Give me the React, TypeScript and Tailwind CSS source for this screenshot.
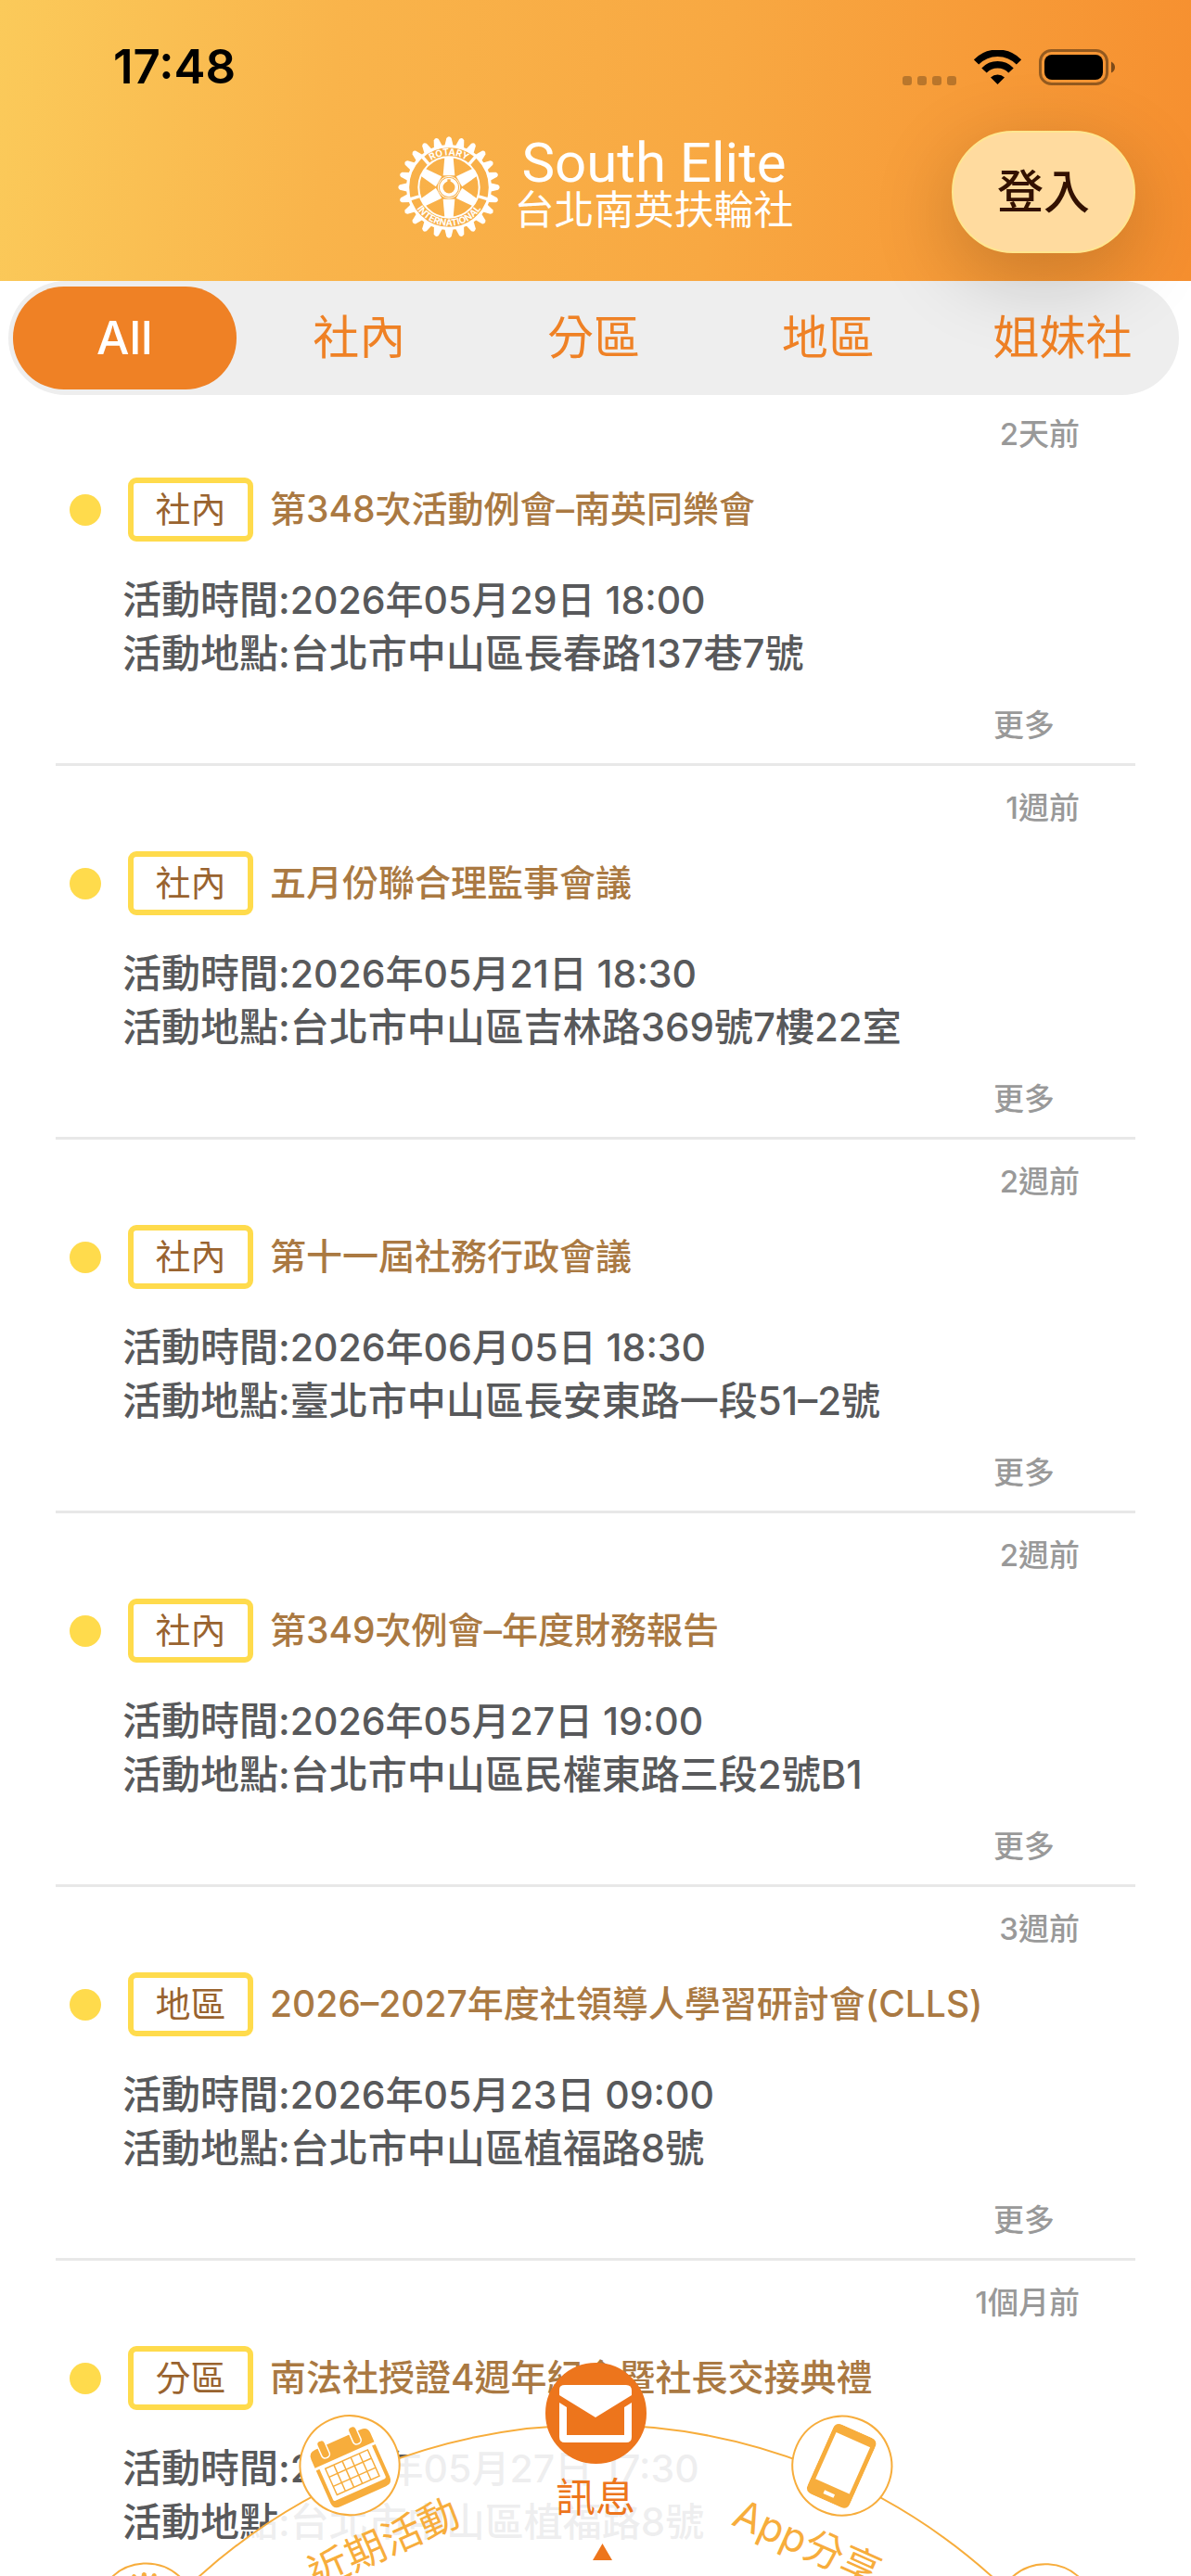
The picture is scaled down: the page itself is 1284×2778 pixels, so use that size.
import type { ReactNode } from "react";

type Activity = { tag: string; title: string; age: string; time: string; place: string };

const tabs = ["All", "社內", "分區", "地區", "姐妹社"];

const activities: Activity[] = [
  { tag: "社內", title: "第348次活動例會–南英同樂會", age: "2天前", time: "2026年05月29日 18:00", place: "台北市中山區長春路137巷7號" },
  { tag: "社內", title: "五月份聯合理監事會議", age: "1週前", time: "2026年05月21日 18:30", place: "台北市中山區吉林路369號7樓22室" },
  { tag: "社內", title: "第十一屆社務行政會議", age: "2週前", time: "2026年06月05日 18:30", place: "臺北市中山區長安東路一段51–2號" },
  { tag: "社內", title: "第349次例會–年度財務報告", age: "2週前", time: "2026年05月27日 19:00", place: "台北市中山區民權東路三段2號B1" },
  { tag: "地區", title: "2026–2027年度社領導人學習研討會(CLLS)", age: "3週前", time: "2026年05月23日 09:00", place: "台北市中山區植福路8號" },
  { tag: "分區", title: "南法社授證4週年紀念暨社長交接典禮", age: "1個月前", time: "2026年05月27日 17:30", place: "台北市中山區植福路8號" }
];

export default function App() {
  return (
    <div className="relative flex h-screen flex-col overflow-hidden bg-white font-['Inter','Noto_Sans_CJK_TC',sans-serif]">
      <header className="pointer-events-none relative z-10 h-[303px] shrink-0 bg-[linear-gradient(97deg,#fbca5a_0%,#f9b44b_28%,#f8a842_60%,#f68f2f_100%)]">
        <StatusBar />
        <div className="grid grid-cols-[1fr_auto_1fr] items-center px-[60px] pt-[18px]">
          <span />
          <div className="flex items-center gap-4 pb-[10px] text-white">
            <RotaryWheel className="h-[110px] w-[110px]" />
            <div className="pb-1 text-center">
              <p className="font-['Roboto',sans-serif] text-[60px] leading-[52px]">South Elite</p>
              <p className="text-[43px] leading-[48px]">台北南英扶輪社</p>
            </div>
          </div>
          <button
            type="button"
            className="pointer-events-auto h-[132px] w-[198px] justify-self-end rounded-[66px] border-2 border-[#ffe68f] bg-[#ffdb9f] text-[50px] font-medium text-[#331100] shadow-[0_24px_90px_rgba(0,0,0,0.2)]"
          >
            登入
          </button>
        </div>
      </header>

      <nav className="mr-[13px] ml-[9px] grid h-[123px] shrink-0 grid-cols-5 gap-3 rounded-[62px] bg-[#eeeeee] px-[5px] py-[6px]">
        {tabs.map((tab, index) => (
          <button
            type="button"
            key={tab}
            className={`rounded-[55px] text-[50px] whitespace-nowrap ${index === 0 ? "bg-[#ef8125] font-medium text-white" : "text-[#ef8125]"}`}
          >
            {tab}
          </button>
        ))}
      </nav>

      <main className="-mt-[3px] flex-1 overflow-hidden px-[60px]">
        {activities.map((activity) => (
          <ActivityRow key={activity.title} activity={activity} />
        ))}
      </main>

      <WheelMenu />
    </div>
  );
}

function StatusBar() {
  return (
    <div className="flex h-[123px] items-center justify-between pt-[22px] pr-[82px] pl-[122px] text-black">
      <span className="text-[51px] font-semibold">17:48</span>
      <div className="flex items-center gap-[19px]">
        <span className="flex gap-[6px] pt-7">
          {[0, 1, 2, 3].map((dot) => (
            <span key={dot} className="h-[10px] w-[10px] rounded-[3px] bg-black/25" />
          ))}
        </span>
        <svg viewBox="0 0 51 37" className="h-[37px] w-[51px]" aria-hidden="true">
          <path d="M2.500 13A32 32 0 0 1 48.500 13" fill="none" stroke="currentColor" strokeWidth="7.500" />
          <path d="M11 22A20 20 0 0 1 40 22" fill="none" stroke="currentColor" strokeWidth="7.500" />
          <path d="M25.500 37L18 29.500A11 11 0 0 1 33 29.500Z" fill="currentColor" />
        </svg>
        <svg viewBox="0 0 82 39" className="h-[39px] w-[82px]" aria-hidden="true">
          <rect x="1.500" y="1.500" width="72" height="36" rx="12" fill="none" stroke="currentColor" strokeOpacity="0.4" strokeWidth="3" />
          <rect x="6" y="6" width="63" height="27" rx="8" fill="currentColor" />
          <path d="M78 13.500Q82 15.500 82 19.500T78 25.500Z" fill="currentColor" fillOpacity="0.5" />
        </svg>
      </div>
    </div>
  );
}

function ActivityRow({ activity }: { activity: Activity }) {
  return (
    <article className="border-b-[3px] border-[#e8e8e8] pt-[21px] pb-2">
      <p className="pr-[60px] text-right text-[33px] leading-[48px] font-medium text-[#999999]">{activity.age}</p>
      <div className="mt-[23px] flex items-center pl-[15px]">
        <span className="h-[34px] w-[34px] rounded-full bg-[#ffdb4c]" />
        <span className="mr-[18px] ml-[29px] grid h-[69px] w-[135px] place-items-center rounded-[9px] border-[6px] border-[#ffdb4c] text-[38px] text-[#99632f]">
          {activity.tag}
        </span>
        <h2 className="text-[39px] font-medium text-[#aa7942]">{activity.title}</h2>
      </div>
      <div className="mt-[34px] pl-[72px] text-[42px] leading-[58px] font-medium text-[#58595b]">
        <p>
          活動時間:<span className="text-[41px]">{activity.time}</span>
        </p>
        <p>活動地點:{activity.place}</p>
      </div>
      <div className="mt-6 flex h-[57px] justify-end pr-[87px]">
        <button type="button" className="self-start text-[33px] leading-[48px] font-medium text-[#999999]">
          更多
        </button>
      </div>
    </article>
  );
}

function WheelMenu() {
  return (
    <nav className="absolute inset-x-0 bottom-0 h-[232px] overflow-hidden">
      <div className="absolute top-[68px] left-1/2 h-[1282px] w-[1282px] -translate-x-1/2 rounded-full border-2 border-[#f7ad3c] bg-white/90" />
      <Spoke turn="-rotate-48">
        <RotaryWheel className="h-[90px] w-[90px]" />
      </Spoke>
      <Spoke turn="-rotate-24" label="近期活動">
        <CalendarIcon />
      </Spoke>
      <Spoke turn="rotate-0" label="訊息" active>
        <MailIcon />
      </Spoke>
      <Spoke turn="rotate-24" label="App分享">
        <PhoneIcon />
      </Spoke>
      <Spoke turn="rotate-48">
        <span className="h-[80px] w-[6px] rounded-full bg-current" />
      </Spoke>
      <svg viewBox="0 0 21 18" className="absolute top-[197px] left-1/2 ml-[-3px] h-[18px] w-[21px] text-[#ed751c]" aria-hidden="true">
        <path d="M10.500 0L21 18H0Z" fill="currentColor" />
      </svg>
    </nav>
  );
}

// Every item hangs from the hub of the wheel, which lies below the screen.
function Spoke({ turn, label, active, children }: { turn: string; label?: string; active?: boolean; children: ReactNode }) {
  return (
    <button
      type="button"
      className={`absolute top-[2px] left-1/2 flex h-[707px] w-[200px] origin-bottom -translate-x-1/2 flex-col items-center ${turn} ${
        active ? "text-[#ed751c]" : "text-[#f7ad3c]"
      }`}
    >
      <span className={`grid h-[109px] w-[109px] place-items-center rounded-full border-2 border-current ${active ? "bg-[#ed751c]" : "bg-white"}`}>
        {children}
      </span>
      {label && <span className="mt-[6px] text-[43px] leading-[60px] whitespace-nowrap">{label}</span>}
    </button>
  );
}

function RotaryWheel({ className }: { className: string }) {
  const cogs = Array.from({ length: 24 }, (_, index) => index * 15);
  return (
    <svg viewBox="-165 -165 330 330" className={className} aria-hidden="true">
      {cogs.map((angle) => (
        <path key={angle} d="M-15 -130L-8 -159Q0 -169 8 -159L15 -130Z" fill="currentColor" transform={`rotate(${angle})`} />
      ))}
      <circle r="133" fill="none" stroke="currentColor" strokeWidth="9" />
      <circle r="98" fill="none" stroke="currentColor" strokeWidth="6" />
      {[-41, 41, -107, 107].map((angle) => (
        <path key={angle} d="M-5 -130H5V-100H-5Z" fill="currentColor" transform={`rotate(${angle})`} />
      ))}
      {[0, 60, 120, 180, 240, 300].map((angle) => (
        <path key={angle} d="M-14 -97H14L19 -38H-19Z" fill="currentColor" transform={`rotate(${angle})`} />
      ))}
      <circle r="35" fill="none" stroke="currentColor" strokeWidth="3" />
      <circle r="25" fill="none" stroke="currentColor" strokeWidth="11" />
      <path d="M-5 -26H5V-16H-5Z" fill="#f8af47" />
      <defs>
        <path id="rim-top" d="M-104 0A104 104 0 0 1 104 0" />
        <path id="rim-bottom" d="M-125 0A125 125 0 0 0 125 0" />
      </defs>
      <g fill="currentColor" fontSize="30" fontWeight="700" textAnchor="middle">
        <text>
          <textPath href="#rim-top" startOffset="50%">ROTARY</textPath>
        </text>
        <text>
          <textPath href="#rim-bottom" startOffset="50%">INTERNATIONAL</textPath>
        </text>
      </g>
    </svg>
  );
}

function CalendarIcon() {
  return (
    <svg viewBox="0 0 80 80" className="h-[80px] w-[80px]" aria-hidden="true">
      <path d="M5 27V17Q5 9 13 9H67Q75 9 75 17V27Z" fill="currentColor" />
      <path d="M5 30H9V66Q9 68 11 68H69Q71 68 71 66V30H75V68Q75 76 67 76H13Q5 76 5 68Z" fill="currentColor" />
      <rect x="17" y="2" width="9" height="20" rx="4" fill="currentColor" stroke="white" strokeWidth="1.500" />
      <rect x="54" y="2" width="9" height="20" rx="4" fill="currentColor" stroke="white" strokeWidth="1.500" />
      <path d="M15 32H65V63H15ZM15 42H65M15 53H65M25 32V63M35 32V63M45 32V63M55 32V63" fill="none" stroke="currentColor" strokeWidth="1.500" />
    </svg>
  );
}

function MailIcon() {
  return (
    <svg viewBox="0 0 80 64" className="h-[64px] w-[80px] text-white" aria-hidden="true">
      <path d="M1 12V6Q1 1 7 1H73Q79 1 79 7V12L40 36Z" fill="currentColor" />
      <path d="M1 20L9 25V55H71V25L79 20V57Q79 63 73 63H7Q1 63 1 57Z" fill="currentColor" />
    </svg>
  );
}

function PhoneIcon() {
  return (
    <svg viewBox="0 0 50 82" className="h-[82px] w-[50px]" aria-hidden="true">
      <path
        d="M8 0H42Q50 0 50 8V74Q50 82 42 82H8Q0 82 0 74V8Q0 0 8 0ZM5 10V65H45V10ZM19 72V76H31V72Z"
        fill="currentColor"
        fillRule="evenodd"
      />
    </svg>
  );
}
